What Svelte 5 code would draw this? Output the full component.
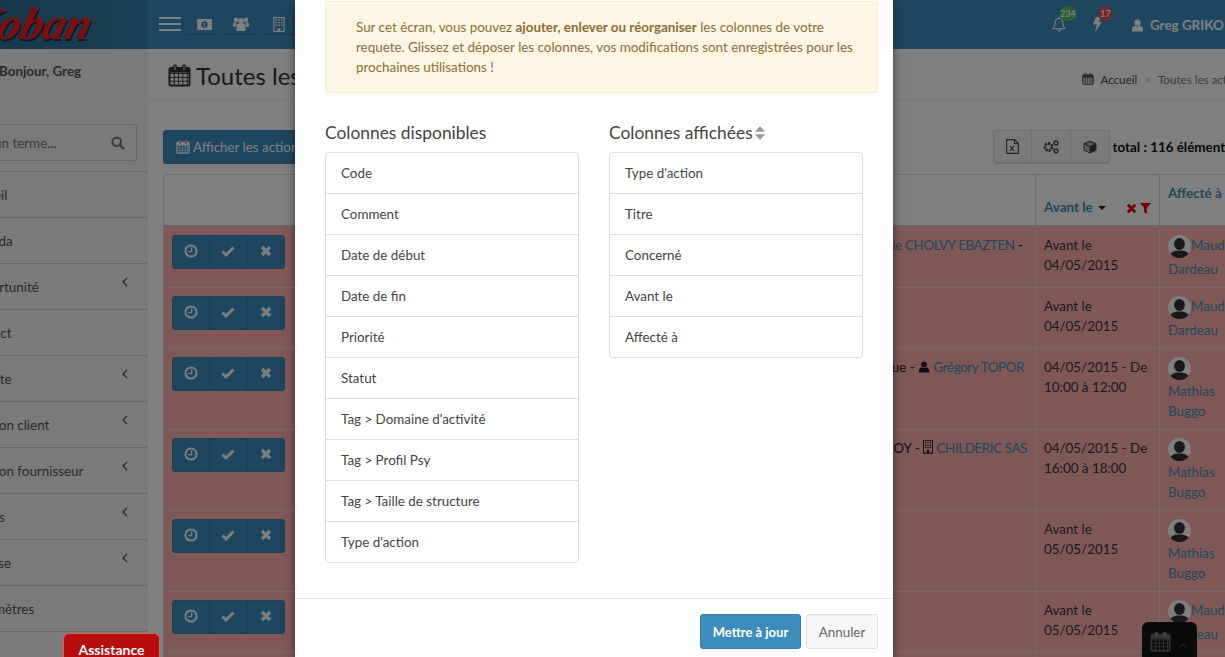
<script>
  const menu = [
    { t: 'Accueil', o: -35 }, { t: 'Agenda', o: -32 }, { t: 'Opportunité', c: 1, o: -34 }, { t: 'Contact', o: -35 }, { t: 'Compte', c: 1, o: -35 },
    { t: 'Gestion client', c: 1, o: -32 }, { t: 'Gestion fournisseur', c: 1, o: -32 }, { t: 'Offres', c: 1, o: -32 }, { t: 'Analyse', c: 1, o: -35 }, { t: 'Paramètres', o: -32 }
  ];
  const available = ['Code', 'Comment', 'Date de début', 'Date de fin', 'Priorité', 'Statut', 'Tag > Domaine d\'activité', 'Tag > Profil Psy', 'Tag > Taille de structure', "Type d'action"];
  const shown = ["Type d'action", 'Titre', 'Concerné', 'Avant le', 'Affecté à'];
  const rows = [
    { k: 'a', d: ['Avant le', '04/05/2015'], who: ['Maud', 'Dardeau'], inline: true },
    { k: '', d: ['Avant le', '04/05/2015'], who: ['Maud', 'Dardeau'], inline: true },
    { k: 'b', d: ['04/05/2015 - De', '10:00 à 12:00'], who: ['Mathias', 'Buggo'] },
    { k: 'c', d: ['04/05/2015 - De', '16:00 à 18:00'], who: ['Mathias', 'Buggo'] },
    { k: '', d: ['Avant le', '05/05/2015'], who: ['Mathias', 'Buggo'] },
    { k: '', d: ['Avant le', '05/05/2015'], who: ['Maud', 'Dardeau'], inline: true },
    { k: '', d: ['Avant le', '05/05/2015'], who: ['Maud', 'Dardeau'], inline: true }
  ];
</script>

{#snippet cal(size, cls)}
  <svg class={cls} width={size} height={size} viewBox="0 0 24 24" aria-hidden="true">
    <rect x="1.5" y="4" width="21" height="18.5" rx="1.5" fill="none" stroke="currentColor" stroke-width="2"/>
    <path d="M2 10h20M2 14h20M2 18h20M6.500 9v13M11 9v13M15.500 9v13M20 9v13" fill="none" stroke="currentColor" stroke-width="1"/>
    <path d="M2 4h20v5H2z" fill="currentColor"/>
    <rect x="5.5" y="1" width="3.5" height="6" rx="1.5" fill="#8a8a8a" stroke="currentColor"/>
    <rect x="15" y="1" width="3.5" height="6" rx="1.5" fill="#8a8a8a" stroke="currentColor"/>
  </svg>
{/snippet}
{#snippet clock()}
  <svg width="14" height="14" viewBox="0 0 14 14" aria-hidden="true"><circle cx="7" cy="7" r="5.6" fill="none" stroke="currentColor" stroke-width="2"/><path d="M7.6 3.6v4H4.2" fill="none" stroke="currentColor" stroke-width="1.4"/></svg>
{/snippet}
{#snippet check()}
  <svg width="14" height="14" viewBox="0 0 14 14" aria-hidden="true"><path d="M1.5 7.5 5 11 12.5 3.5" fill="none" stroke="currentColor" stroke-width="3"/></svg>
{/snippet}
{#snippet times(size = 12)}
  <svg width={size} height={size} viewBox="0 0 12 12" aria-hidden="true"><path d="M2 2l8 8M10 2l-8 8" fill="none" stroke="currentColor" stroke-width="3.2"/></svg>
{/snippet}
{#snippet person(w, h)}
  <svg width={w} height={h} viewBox="0 0 14 14" aria-hidden="true"><circle cx="7" cy="4" r="3.4" fill="currentColor"/><path d="M1 13.5V11c0-2.4 2-3.6 3.4-3.8L7 8.4l2.6-1.2C11 7.4 13 8.6 13 11v2.5z" fill="currentColor"/></svg>
{/snippet}
{#snippet building(w, h)}
  <svg width={w} height={h} viewBox="0 0 12 16" aria-hidden="true"><path fill-rule="evenodd" d="M0 0h12v16H0zM1.2 1.2v13.6h3.2V12h3.2v2.8h3.2V1.2z" fill="currentColor"/><path d="M2.5 2.5h1.5v1.5H2.5zM5.2 2.5h1.5v1.5H5.2zM8 2.5h1.5v1.5H8zM2.5 5.2h1.5v1.5H2.5zM5.2 5.2h1.5v1.5H5.2zM8 5.2h1.5v1.5H8zM2.5 8h1.5v1.5H2.5zM5.2 8h1.5v1.5H5.2zM8 8h1.5v1.5H8z" fill="currentColor"/></svg>
{/snippet}
{#snippet avatar()}
  <svg class="avatar" width="23" height="23" viewBox="0 0 23 23" aria-hidden="true"><circle cx="11.5" cy="11.5" r="11.5" fill="#fff"/><clipPath id="av"><circle cx="11.5" cy="11.5" r="11.5"/></clipPath><g clip-path="url(#av)" fill="#333"><ellipse cx="11.5" cy="9" rx="5.4" ry="6"/><path d="M1 23c0-5 4-6.500 7-7.500h7c3 1 7 2.500 7 7.500z"/></g></svg>
{/snippet}

<div class="root">
  <header class="topbar">
    <div class="logo"><span class="logo-text">Koban</span></div>
    <nav class="topnav">
      <span class="burger"><i></i><i></i><i></i></span>
      <span class="tab t1"><svg width="15" height="11" viewBox="0 0 16 12" aria-hidden="true"><path fill-rule="evenodd" d="M0 0h16v12H0zM8 2.500a3.500 3.500 0 1 0 0 7 3.500 3.500 0 0 0 0-7z" fill="currentColor"/><path d="M7.300 4.500 8.600 4v4.200H7.600V5.300l-.4.2z" fill="currentColor"/></svg></span>
      <span class="tab t2"><svg width="16" height="14" viewBox="0 0 16 14" aria-hidden="true"><circle cx="8" cy="4" r="3" fill="currentColor"/><circle cx="3" cy="2.800" r="2.200" fill="currentColor"/><circle cx="13" cy="2.800" r="2.200" fill="currentColor"/><path d="M3.500 14V9c0-1.500 1-2.500 2.500-2.500h4c1.500 0 2.500 1 2.500 2.500v5z" fill="currentColor"/><path d="M0 9.500V7c0-1 .8-1.800 1.800-1.800h1.800L2.700 10zM16 9.500V7c0-1-.8-1.800-1.800-1.800h-1.800l.9 4.800z" fill="currentColor"/></svg></span>
      <span class="tab t3">{@render building(12, 15)}</span>
      <span class="spring"></span>
      <span class="note bell"><svg width="14" height="15" viewBox="0 0 14 15" aria-hidden="true"><path d="M7 1.500c-2.500 0-3.800 1.800-3.800 4 0 3.500-.8 5-2.200 6.300h12c-1.400-1.300-2.200-2.800-2.200-6.300 0-2.200-1.300-4-3.800-4z M5.500 12.500c.2 1 .8 1.700 1.500 1.700s1.300-.7 1.500-1.700" fill="none" stroke="currentColor" stroke-width="1.100"/><circle cx="7" cy="1" r=".9" fill="currentColor"/></svg><b class="badge green">234</b></span>
      <span class="note bolt"><svg width="9" height="15" viewBox="0 0 9 15" aria-hidden="true"><path d="M3 0h5L5.500 5H9L2 15l1.800-7.500H0z" fill="currentColor"/></svg><b class="badge red">17</b></span>
      <span class="who">{@render person(13, 13)}<b>Greg GRIKO</b></span>
    </nav>
  </header>

  <div class="shell">
    <aside class="side">
      <div class="hello">Bonjour, Greg</div>
      <div class="search"><span>Chercher un terme...</span><svg width="14" height="14" viewBox="0 0 14 14" aria-hidden="true"><circle cx="5.700" cy="5.700" r="4.300" fill="none" stroke="currentColor" stroke-width="2"/><path d="M8.800 8.800 13 13" stroke="currentColor" stroke-width="2.400"/></svg></div>
      <ul class="menu">
        {#each menu as m}
          <li><span style="margin-left: {m.o}px">{m.t}</span>{#if m.c}<svg class="chev" width="6" height="10" viewBox="0 0 6 10" aria-hidden="true"><path d="M5 1 1 5l4 4" fill="none" stroke="currentColor" stroke-width="1.300"/></svg>{/if}</li>
        {/each}
      </ul>
    </aside>

    <main class="main">
      <div class="head">
        <h1>{@render cal(23, 'h-cal')}<span>Toutes les actions</span></h1>
        <div class="crumb">{@render cal(12, 'c-cal')}<span>Accueil</span><em>&gt;</em><span class="cur">Toutes les actions</span></div>
      </div>
      <div class="tools">
        <button class="primary">{@render cal(14, 'b-cal')}Afficher les actions</button>
        <div class="rt">
          <div class="group">
            <span class="gb"><svg width="13" height="15" viewBox="0 0 13 15" aria-hidden="true"><path d="M.6.600h8l3.800 3.800v10H.600zM8.500.600v4h3.900" fill="none" stroke="currentColor" stroke-width="1.100"/><path d="M4 7l4 5M8 7l-4 5" stroke="currentColor" stroke-width="1.200"/></svg></span>
            <span class="gb"><svg width="16" height="14" viewBox="0 0 16 14" aria-hidden="true"><circle cx="5.500" cy="7" r="3.500" fill="none" stroke="currentColor" stroke-width="2.800" stroke-dasharray="2.200 .9"/><circle cx="13" cy="3" r="1.900" fill="none" stroke="currentColor" stroke-width="1.500"/><circle cx="13" cy="11" r="1.900" fill="none" stroke="currentColor" stroke-width="1.500"/></svg></span>
            <span class="gb"><svg width="14" height="14" viewBox="0 0 14 14" aria-hidden="true"><path d="M7 .5 13.500 3.500v7L7 13.500.5 10.500v-7z" fill="currentColor"/><path d="M2.500 4 7 2l4.500 2L7 6z" fill="#bbb"/><path d="M1.500 4.800 6.500 7v5.200l-5-2.300z" fill="#bbb"/></svg></span>
          </div>
          <b class="total">total : 116 éléments</b>
        </div>
      </div>

      <table>
        <colgroup><col class="c1"/><col class="c2"/><col class="c3"/><col class="c4"/></colgroup>
        <thead>
          <tr>
            <th></th>
            <th></th>
            <th class="bottom"><span class="sort">Avant le <i class="caret"></i></span><span class="filters">{@render times(11)}<svg width="11" height="11" viewBox="0 0 11 11" aria-hidden="true"><path d="M0 0h11L6.800 5v6L4.200 9.200V5z" fill="currentColor"/></svg></span></th>
            <th class="top">Affecté à</th>
          </tr>
        </thead>
        <tbody>
          {#each rows as r}
            <tr>
              <td><div class="acts"><span>{@render clock()}</span><span>{@render check()}</span><span>{@render times()}</span></div></td>
              <td class="con">
                {#if r.k === 'a'}<span class="e1"><a>Monique CHOLVY EBAZTEN</a> -</span>{/if}
                {#if r.k === 'b'}<span class="e2">Dominique - <span class="ic">{@render person(12, 12)}</span> <a>Grégory TOPOR</a></span>{/if}
                {#if r.k === 'c'}<span>LEROY - <span class="ic">{@render building(10, 14)}</span> <a>CHILDERIC SAS</a></span>{/if}
              </td>
              <td class="date">{r.d[0]}<br/>{r.d[1]}</td>
              <td class="aff"><span class="line">{@render avatar()}{#if r.inline}<a>{r.who[0]}</a>{/if}</span>{#if !r.inline}<a>{r.who[0]}</a><br/>{/if}<a>{r.who[1]}</a></td>
            </tr>
          {/each}
        </tbody>
      </table>
    </main>
  </div>

  <div class="agenda">{@render cal(21, 'a-cal')}<svg width="8" height="5" viewBox="0 0 8 5" aria-hidden="true"><path d="M.5 4.500 4 1l3.500 3.500" fill="none" stroke="currentColor"/></svg></div>

  <div class="overlay"></div>

  <div class="assist">Assistance</div>

  <section class="modal">
    <div class="body">
      <div class="alert">Sur cet écran, vous pouvez <b>ajouter, enlever ou réorganiser</b> les colonnes de votre<br/>requete. Glissez et déposer les colonnes, vos modifications sont enregistrées pour les<br/>prochaines utilisations !</div>
      <div class="cols">
        <div>
          <h4>Colonnes disponibles</h4>
          <ul class="list">{#each available as a}<li>{a}</li>{/each}</ul>
        </div>
        <div>
          <h4>Colonnes affichées <svg class="srt" width="10" height="14" viewBox="0 0 10 14" aria-hidden="true"><path d="M5 0l5 5.800H0zM5 14l5-5.800H0z" fill="currentColor"/></svg></h4>
          <ul class="list">{#each shown as a}<li>{a}</li>{/each}</ul>
        </div>
      </div>
    </div>
    <footer class="foot">
      <button class="update">Mettre à jour</button>
      <button class="cancel">Annuler</button>
    </footer>
  </section>
</div>

<style>
  :global(body) { margin: 0; font-family: "Lato", "Noto Sans", sans-serif; font-size: 13.4px; color: #333; }
  .root { position: relative; width: 1225px; height: 657px; overflow: hidden; background: #fff; }
  a { color: #3c8dbc; }
  button { font: inherit; }

  .topbar { display: flex; height: 49px; background: #3c8dbc; }
  .logo { width: 148px; flex: none; overflow: hidden; background: linear-gradient(90deg, #336f94, #367fa9); }
  .logo-text { display: block; margin: -5px 0 0 -31px; font: italic bold 45px/58px "Liberation Serif", serif; color: #ff1a1a; text-shadow: 2px 2px 0 #0d3348; transform: skewX(-16deg); }
  .topnav { flex: 1; display: flex; align-items: flex-start; color: #fff; position: relative; }
  .burger { display: flex; flex-direction: column; gap: 4px; margin: 17px 0 0 11px; width: 22px; }
  .burger i { height: 2px; background: #fff; }
  .tab { width: 34px; height: 35px; display: flex; align-items: center; justify-content: center; border: 1px solid transparent; border-bottom-color: #2f7199; border-radius: 0 0 4px 4px; box-sizing: border-box; margin-top: 0; padding-top: 13px; }
  .t1 { margin-left: 5px; padding-left: 3px; }
  .t2, .t3 { margin-left: 4px; }
  .spring { flex: 1; }
  .note { position: relative; margin-top: 17px; }
  .bell { margin-right: 27px; }
  .bolt { margin-right: 29px; margin-top: 17px; }
  .badge { position: absolute; top: -11px; left: 8px; min-width: 15px; height: 15px; border-radius: 8px; font-size: 9px; line-height: 15px; text-align: center; color: #fff; }
  .red { left: 5px; }
  .green { background: #5cb85c; }
  .red { background: #d9534f; }
  .who { display: flex; align-items: center; gap: 6px; margin-top: 17px; width: 94px; white-space: nowrap; }
  .who svg { flex: none; }

  .shell { display: flex; height: 608px; }
  .side { width: 148px; flex: none; overflow: hidden; background: #f4f4f4; border-right: 1px solid #eee; box-sizing: border-box; }
  .hello { font-weight: 700; margin: 13px 0 0 -1px; line-height: 18px; color: #555; white-space: nowrap; }
  .search { display: flex; align-items: center; justify-content: space-between; width: 137px; height: 37px; box-sizing: border-box; margin: 44px 0 10px 0; padding-right: 11px; border: 1px solid #ccc; border-left: 0; border-radius: 0 3px 3px 0; color: #777; white-space: nowrap; overflow: hidden; }
  .search span { margin-left: -63px; }
  .menu { list-style: none; margin: 0; padding: 0; border-top: 1px solid #ccc; }
  .menu li { display: flex; height: 45px; align-items: center; border-bottom: 1px solid #ccc; white-space: nowrap; position: relative; color: #555; }
  .chev { position: absolute; left: 122px; top: 13px; }

  .main { width: 1100px; flex: none; background: #fff; }
  .head { display: flex; justify-content: space-between; align-items: center; height: 51px; box-sizing: border-box; border-bottom: 1px solid #eee; padding: 0 0 0 20px; }
  h1 { display: flex; align-items: center; gap: 5px; margin: 2px 0 0; font-size: 24px; font-weight: 400; color: #333; }
  .crumb { display: flex; align-items: center; gap: 6px; font-size: 11.6px; margin: 10px 0 0; white-space: nowrap; color: #444; }
  .crumb em { font-style: normal; color: #bbb; margin: 0 1px; }
  .cur { color: #777; }
  .tools { display: flex; justify-content: space-between; align-items: flex-start; margin: 30px 17px 10px 15px; }
  .primary { display: flex; align-items: center; gap: 3px; height: 34px; padding: 0 12px; background: #3c8dbc; border: 1px solid #367fa9; border-radius: 3px; color: #fff; white-space: nowrap; }
  .rt { display: flex; align-items: center; gap: 3px; white-space: nowrap; }
  .group { display: flex; height: 34px; width: 117px; box-sizing: border-box; border: 1px solid #ddd; border-bottom-width: 2px; border-radius: 3px; background: #f4f4f4; color: #444; }
  .gb { flex: 1; display: flex; align-items: center; justify-content: center; border-left: 1px solid #ddd; }
  .gb:first-child { border-left: 0; }
  .total { color: #111; }

  table { border-collapse: collapse; table-layout: fixed; width: 1137px; margin-left: 15px; }
  .c1 { width: 500px; }
  .c2 { width: 372px; }
  .c3 { width: 124px; }
  .c4 { width: 141px; }
  th, td { border: 1px solid #ddd; padding: 8px; line-height: 20px; text-align: left; vertical-align: top; font-weight: 400; }
  thead th { height: 34px; border-bottom: 2px solid #ccc; color: #3c8dbc; font-weight: 700; }
  th.bottom { vertical-align: bottom; position: relative; }
  th.top { vertical-align: top; }
  .sort { display: inline-block; }
  .caret { display: inline-block; width: 0; height: 0; border: 4px solid transparent; border-top-color: #222; border-bottom: 0; margin: 0 0 2px 2px; }
  .filters { position: absolute; right: 8px; bottom: 11px; display: flex; gap: 3px; color: #e00; }
  tbody td { background: #ffb3ab; }
  .date { white-space: nowrap; }
  .acts { display: flex; width: 113px; height: 34px; box-sizing: border-box; background: #3c8dbc; border: 1px solid #367fa9; border-radius: 3px; color: #fff; }
  .acts span { flex: 1; display: flex; align-items: center; justify-content: center; border-left: 1px solid #367fa9; padding-bottom: 3px; }
  .acts span:first-child { border-left: 0; }
  .con { text-align: right; color: #222; white-space: nowrap; }
  .con a { letter-spacing: -.4px; }
  .e1 { margin-right: 4px; }
  .e2 { margin-right: 3px; }
  .ic { color: #222; vertical-align: -1px; }
  .aff a { vertical-align: baseline; }
  .line { display: flex; height: 24px; align-items: flex-start; }
  .line a { line-height: 20px; }
  .avatar { flex: none; }

  .agenda { position: absolute; left: 1142px; top: 622px; width: 55px; height: 40px; background: #141414; border-radius: 6px 6px 0 0; display: flex; align-items: flex-start; gap: 8px; padding: 9px 0 0 8px; box-sizing: border-box; color: #666; }
  .agenda svg:last-child { margin-top: 12px; }
  .overlay { position: absolute; inset: 0; background: rgba(0, 0, 0, .5); }
  .assist { position: absolute; left: 63px; top: 633px; width: 97px; height: 30px; box-sizing: border-box; background: #b80d0d; border: 1px solid #d8635e; border-bottom: 0; border-radius: 6px 6px 0 0; color: #fff; font-weight: 700; font-size: 14px; text-align: center; line-height: 32px; }

  .modal { position: absolute; left: 295px; top: 0; width: 598px; height: 657px; background: #fff; box-shadow: 0 3px 9px rgba(0, 0, 0, .5); }
  .body { height: 598px; box-sizing: border-box; padding: 1px 15px 0 30px; }
  .alert { height: 92px; box-sizing: border-box; padding: 15px 30px; line-height: 20px; background: #fcf6e3; border: 1px solid #faebcc; border-radius: 3px; color: #8a6d3b; white-space: nowrap; }
  .cols { display: grid; grid-template-columns: 254px 254px; gap: 30px; }
  h4 { display: flex; align-items: center; gap: 3px; margin: 30px 0 9px; font-size: 17.4px; line-height: 20px; font-weight: 400; color: #444; }
  .srt { color: #999; margin-left: -1px; }
  .list { list-style: none; margin: 0; padding: 0; border: 1px solid #ddd; border-radius: 4px; }
  .list li { height: 40px; line-height: 40px; padding: 0 15px; border-top: 1px solid #ddd; color: #444; }
  .list li:first-child { border-top: 0; }
  .foot { display: flex; justify-content: flex-end; gap: 5px; padding: 15px 15px 0; border-top: 1px solid #e5e5e5; }
  .update { height: 35px; width: 101px; background: #3c8dbc; border: 1px solid #367fa9; border-radius: 3px; color: #fff; font-weight: 700; font-size: 13px; padding: 0; }
  .cancel { height: 35px; width: 72px; background: #f7f7f7; border: 1px solid #ddd; border-radius: 3px; color: #666; padding: 0; }
</style>
